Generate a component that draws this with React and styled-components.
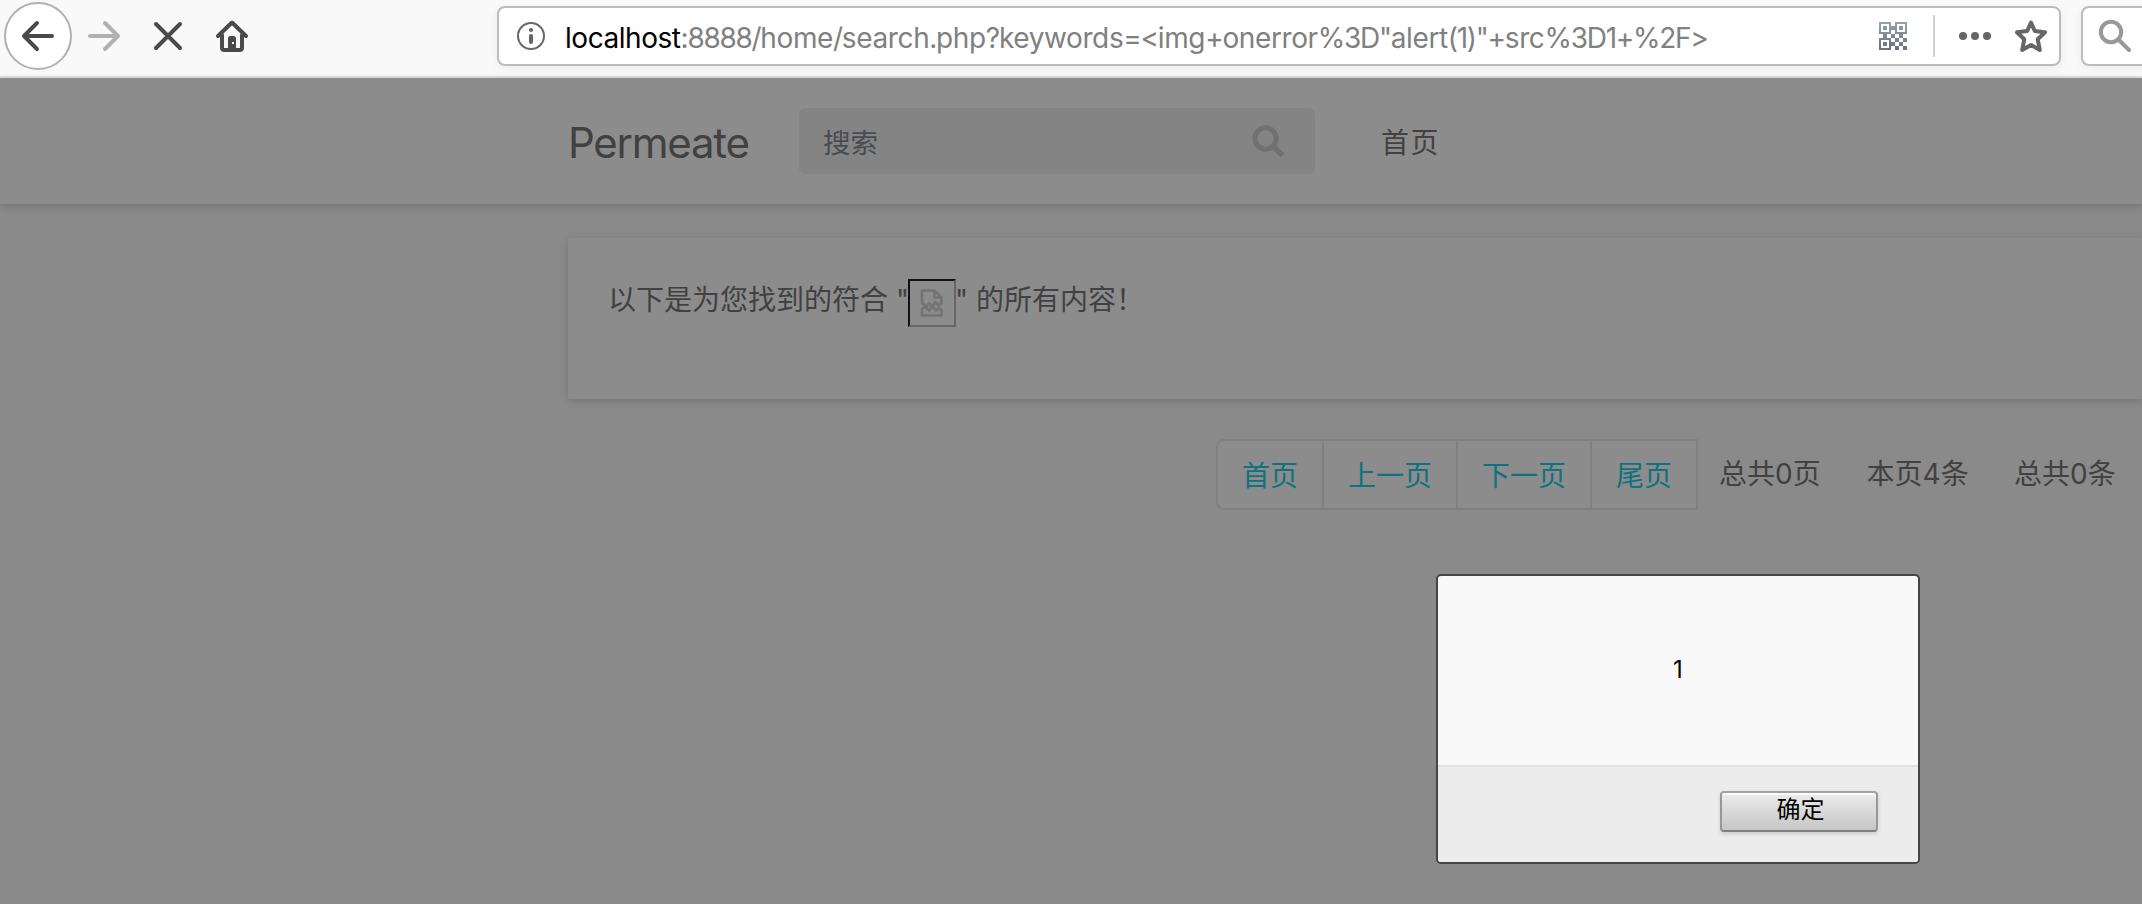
import React from "react";
import styled, { createGlobalStyle } from "styled-components";

const Global = createGlobalStyle`
  *, *::before, *::after { box-sizing: border-box; }
  html, body { margin: 0; padding: 0; overflow: hidden; background: #8a8a8a; }
  body { font-family: Inter, "Noto Sans CJK SC", sans-serif; }
  button, input { font: inherit; margin: 0; }
`;

const Window = styled.div`
  position: relative;
  display: flex;
  flex-direction: column;
  width: 2142px;
  height: 904px;
  overflow: hidden;
  background: #8a8a8a;
`;

const Toolbar = styled.header`
  display: flex;
  flex: none;
  height: 78px;
  padding-top: 2px;
  background: #f9f9f9;
  border-bottom: 2px solid #e0e0e0;
`;

const NavButtons = styled.div`
  display: flex;
  width: 497px;
  flex: none;
  padding-left: 4px;
`;

const NavButton = styled.button`
  display: flex;
  align-items: center;
  justify-content: center;
  width: ${(p) => p.$width}px;
  height: 68px;
  padding: 0;
  border: 0;
  background: none;
  color: ${(p) => (p.$dim ? "#b1b1b1" : "#4a4a4a")};
`;

const BackButton = styled(NavButton)`
  border: 2px solid #b0b0b0;
  border-radius: 50%;
  background: #fff;
`;

const Field = styled.div`
  display: flex;
  align-items: center;
  flex: none;
  width: ${(p) => p.$width}px;
  height: 60px;
  margin: 4px 20px 0 0;
  background: #fff;
  border: 2px solid #bcbcbc;
  border-radius: 8px;
  box-shadow: 0 2px 8px rgba(0, 0, 0, 0.06);
`;

const UrlField = styled(Field)`
  padding-left: 18px;
`;

const SearchField = styled(Field)`
  padding-left: 14px;
`;

const Url = styled.div`
  flex: 1;
  padding: 3px 0 0 20px;
  font-size: 28px;
  line-height: 36px;
  letter-spacing: -0.38px;
  white-space: nowrap;
  color: #808080;
`;

const Host = styled.span`
  color: #000;
  letter-spacing: -0.45px;
`;

const Tight = styled.span`
  letter-spacing: -1.28px;
`;

const FieldActions = styled.div`
  display: flex;
  align-items: center;
  padding-right: 12px;
`;

const Separator = styled.div`
  width: 2px;
  height: 42px;
  margin: 0 24px 0 26px;
  background: #d2d2d2;
`;

const SiteNav = styled.nav`
  display: flex;
  flex: none;
  align-items: center;
  height: 126px;
  padding: 0 0 0 568px;
  background: #8c8c8c;
  box-shadow: 0 2px 8px rgba(0, 0, 0, 0.18);
  color: #414141;
`;

const Brand = styled.div`
  width: 231px;
  padding-top: 4px;
  font-size: 42px;
  line-height: 52px;
  letter-spacing: -1.25px;
`;

const SearchBox = styled.div`
  display: flex;
  align-items: center;
  justify-content: space-between;
  width: 516px;
  height: 66px;
  padding: 0 30px 0 24px;
  border-radius: 6px;
  background: #848484;
  color: #484b50;
  font-size: 27.5px;
`;

const MenuLink = styled.a`
  margin-left: 66px;
  font-size: 28px;
  letter-spacing: 1.5px;
`;

const Card = styled.section`
  flex: none;
  height: 161px;
  margin: 34px 0 0 568px;
  padding: 41px 0 0 40px;
  background: #8c8c8c;
  box-shadow: 0 2px 8px rgba(0, 0, 0, 0.16);
`;

const ResultText = styled.p`
  display: flex;
  margin: 0;
  color: #414141;
  font-size: 28px;
  line-height: 43px;
  white-space: pre;
`;

const Before = styled.span`
  width: 300px;
  flex: none;
`;

const After = styled.span`
  margin-left: -1px;
`;

const BrokenImage = styled.span`
  display: flex;
  align-items: center;
  justify-content: center;
  width: 48px;
  height: 48px;
  border: 2px solid;
  border-color: #111 #666 #666 #111;
  color: #737373;
`;

const Pager = styled.div`
  display: flex;
  flex: none;
  height: 71px;
  margin: 40px 0 0 1216px;
  color: #414141;
  font-size: 28px;
  line-height: 42px;
`;

const PageLink = styled.a`
  flex: none;
  margin-right: -2px;
  padding: 14px 24px 11px;
  border: 2px solid #7f8081;
  border-radius: ${(p) => (p.$first ? "8px 0 0 8px" : "0")};
  background: #8c8c8c;
  color: #0f7280;
`;

const PageInfo = styled.span`
  flex: none;
  width: 147.5px;
  padding-top: 14px;
  white-space: nowrap;

  ${PageLink} + & {
    margin-left: 23px;
  }
`;

const Dialog = styled.div`
  position: absolute;
  left: 1436px;
  top: 574px;
  display: flex;
  flex-direction: column;
  width: 484px;
  height: 290px;
  overflow: hidden;
  border: 2px solid #454545;
  border-radius: 5px;
  background: #f9f9f9;
  color: #000;
  font-size: 24px;
`;

const DialogMessage = styled.div`
  display: flex;
  align-items: center;
  justify-content: center;
  height: 189px;
  padding-bottom: 3px;
`;

const DialogFooter = styled.div`
  display: flex;
  flex: 1;
  justify-content: flex-end;
  padding: 24px 40px 0 0;
  border-top: 2px solid #e0e0e0;
  background: #ececec;
`;

const ConfirmButton = styled.button`
  width: 158px;
  height: 41px;
  padding: 0 0 3px 3px;
  border: 2px solid #979797;
  border-top-color: #a3a3a3;
  border-bottom-color: #7f7f7f;
  border-radius: 4px;
  background: linear-gradient(#ececec, #c6c6c6);
  box-shadow: inset 0 2px 0 #fcfcfc, 0 2px 4px rgba(0, 0, 0, 0.14);
  color: #000;
  line-height: 32px;
`;

const Icon = styled.svg`
  display: block;
  flex: none;
  fill: none;
  stroke: currentColor;
  stroke-width: 4;
  stroke-linecap: round;
  stroke-linejoin: round;
`;

const ArrowLeft = () => (
  <Icon width="34" height="34" viewBox="0 0 34 34">
    <path d="M31 17H4M16 4 3 17l13 13" />
  </Icon>
);

const ArrowRight = () => (
  <Icon width="34" height="34" viewBox="0 0 34 34">
    <path d="M3 17h27M18 4l13 13-13 13" />
  </Icon>
);

const Stop = () => (
  <Icon width="34" height="34" viewBox="0 0 34 34">
    <path d="M5 5l24 24M29 5 5 29" />
  </Icon>
);

const Home = () => (
  <Icon width="34" height="34" viewBox="0 0 34 34">
    <path d="M3 17 17 3.500 31 17M7 16v12.500q0 2.500 2.500 2.500h15q2.500 0 2.500-2.500V16" />
    <path
      d="M13 31V19.500q0-2.500 2.500-2.500h3q2.500 0 2.500 2.500V31zM17 23h2v2h-2z"
      fill="currentColor"
      fillRule="evenodd"
      stroke="none"
    />
  </Icon>
);

const Info = () => (
  <Icon width="28" height="28" viewBox="0 0 28 28" color="#666">
    <circle cx="14" cy="14" r="13" strokeWidth="2" />
    <circle cx="14" cy="8" r="2.1" fill="currentColor" stroke="none" />
    <path d="M14 14v6" />
  </Icon>
);

const FINDERS = [
  [0, 0],
  [16, 0],
  [0, 16],
];
const MODULES = [
  [3, 1],
  [1, 3],
  [3, 3],
  [5, 3],
  [4, 4],
  [6, 4],
  [3, 5],
  [5, 5],
  [4, 6],
  [6, 6],
];

const QrCode = () => (
  <Icon width="28" height="28" viewBox="0 0 28 28">
    <linearGradient id="qr" x1="0" y1="0" x2="0" y2="28" gradientUnits="userSpaceOnUse">
      <stop offset="0" stopColor="#98a2ae" />
      <stop offset="1" stopColor="#68727d" />
    </linearGradient>
    <g fill="url(#qr)" stroke="none">
      {FINDERS.map(([x, y]) => (
        <path
          key={`${x}-${y}`}
          fillRule="evenodd"
          d={`M${x} ${y}h12v12h-12zM${x + 2} ${y + 2}v8h8v-8zM${x + 4} ${y + 4}h4v4h-4z`}
        />
      ))}
      {MODULES.map(([c, r]) => (
        <path key={`${c}-${r}`} d={`M${c * 4} ${r * 4}h4v4h-4z`} />
      ))}
    </g>
  </Icon>
);

const Dots = () => (
  <Icon width="32" height="8" viewBox="0 0 32 8" color="#666">
    <g fill="currentColor" stroke="none">
      <circle cx="4" cy="4" r="4" />
      <circle cx="16" cy="4" r="4" />
      <circle cx="28" cy="4" r="4" />
    </g>
  </Icon>
);

const StarIcon = styled(Icon)`
  margin-left: 24px;
  color: #666;
`;

const Star = () => (
  <StarIcon width="32" height="34" viewBox="0 0 32 34">
    <path d="M16 3.500 19.800 12 30 13.300 22.700 20.300 24.800 31 16 26 7.200 31 9.300 20.300 2 13.300 12.200 12z" />
  </StarIcon>
);

const SearchIcon = () => (
  <Icon width="34" height="34" viewBox="0 0 34 34" color="#999">
    <circle cx="14" cy="13" r="10.200" />
    <path d="M21.500 20.500 32 31" />
  </Icon>
);

const SiteSearchIcon = () => (
  <Icon width="33" height="33" viewBox="0 0 33 33" color="#717171">
    <circle cx="13.500" cy="13.500" r="10.700" strokeWidth="5" />
    <path d="M21.500 21.500 30.500 30.500" strokeWidth="5.500" strokeLinecap="butt" />
  </Icon>
);

const BrokenIcon = () => (
  <Icon width="26" height="30" viewBox="0 0 26 30">
    <path
      d="M3 15V2.500h12.500l7 7V15l-3 2.500-3-3-3.500 4-3-3-3 3zM15.500 3v6.500h7M3 27.500V21l3-2.500 4 4 3.500-4 3.500 4 3-2.500 2.500 2v5.500z"
      strokeWidth="2.600"
      strokeLinejoin="miter"
    />
  </Icon>
);

const QUERY = ':8888/home/search.php?keywords=<img+onerror%3D"alert(1)"+src%3D1+%2F>';

// Lower-case runs keep the normal tracking; digits and signs sit closer together.
const UrlRest = ({ text }) =>
  text
    .split(/([a-z]+)/)
    .filter(Boolean)
    .map((part, i) =>
      /^[a-z]/.test(part) ? part : <Tight key={i}>{part}</Tight>
    );

export default function App() {
  return (
    <>
      <Global />
      <Window>
        <Toolbar>
          <NavButtons>
            <BackButton $width={68}>
              <ArrowLeft />
            </BackButton>
            <NavButton $width={64} $dim>
              <ArrowRight />
            </NavButton>
            <NavButton $width={64}>
              <Stop />
            </NavButton>
            <NavButton $width={64}>
              <Home />
            </NavButton>
          </NavButtons>
          <UrlField $width={1564}>
            <Info />
            <Url>
              <Host>localhost</Host>
              <UrlRest text={QUERY} />
            </Url>
            <FieldActions>
              <QrCode />
              <Separator />
              <Dots />
              <Star />
            </FieldActions>
          </UrlField>
          <SearchField $width={300}>
            <SearchIcon />
          </SearchField>
        </Toolbar>

        <SiteNav>
          <Brand>Permeate</Brand>
          <SearchBox>
            搜索
            <SiteSearchIcon />
          </SearchBox>
          <MenuLink>首页</MenuLink>
        </SiteNav>

        <Card>
          <ResultText>
            <Before>以下是为您找到的符合 "</Before>
            <BrokenImage>
              <BrokenIcon />
            </BrokenImage>
            <After>" 的所有内容！</After>
          </ResultText>
        </Card>

        <Pager>
          <PageLink $first>首页</PageLink>
          <PageLink>上一页</PageLink>
          <PageLink>下一页</PageLink>
          <PageLink>尾页</PageLink>
          <PageInfo>总共0页</PageInfo>
          <PageInfo>本页4条</PageInfo>
          <PageInfo>总共0条</PageInfo>
        </Pager>

        <Dialog role="alertdialog">
          <DialogMessage>1</DialogMessage>
          <DialogFooter>
            <ConfirmButton>确定</ConfirmButton>
          </DialogFooter>
        </Dialog>
      </Window>
    </>
  );
}
